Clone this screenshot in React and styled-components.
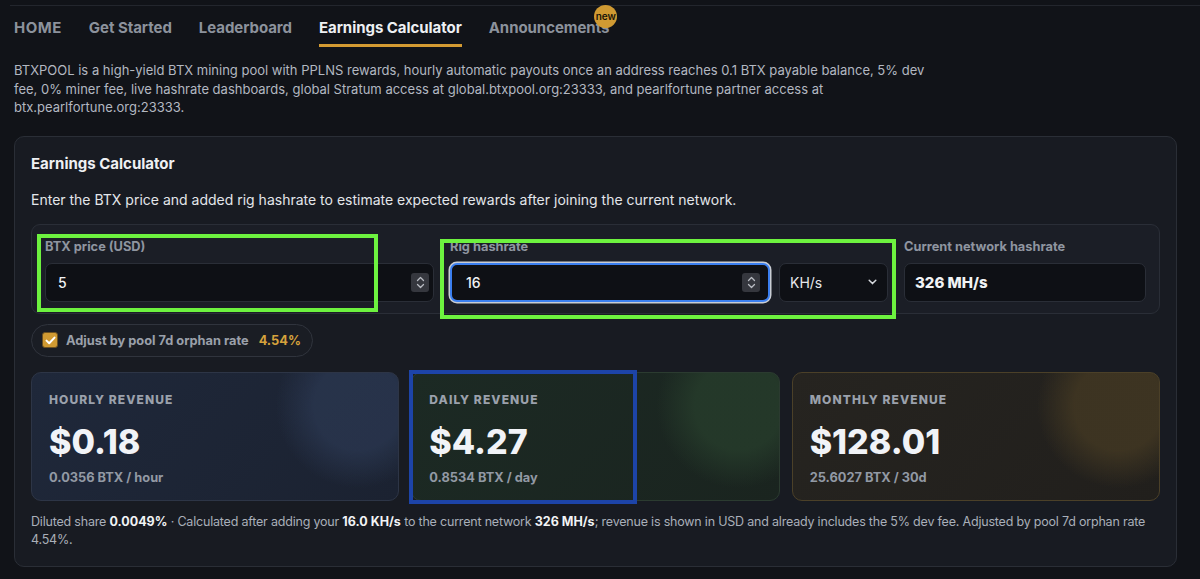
import React, { useState } from 'react';
import styled, { createGlobalStyle } from 'styled-components';

const GlobalStyle = createGlobalStyle`
  html, body {
    margin: 0;
    padding: 0;
    background: #111318;
    font-family: Inter, "Noto Sans", "Liberation Sans", sans-serif;
    color: #e6e8ec;
  }
  * { box-sizing: border-box; }
`;

const Page = styled.div`
  width: 1200px;
  height: 579px;
  overflow: hidden;
  position: relative;
  padding: 5px 0 0 10px;
`;

const Nav = styled.nav`
  display: flex;
  gap: 27px;
  border-top: 1px solid #23262d;
  padding-left: 4px;
`;

const Tab = styled.div`
  position: relative;
  padding: 12px 0 7px;
  font-size: 15px;
  font-weight: 700;
  line-height: 19px;
  letter-spacing: ${(p) => (p.caps ? '0.5px' : '-0.05px')};
  color: ${(p) => (p.active ? '#eef0f3' : '#8c929c')};
  border-bottom: 3px solid ${(p) => (p.active ? '#d49b32' : 'transparent')};
`;

const Badge = styled.span`
  position: absolute;
  top: -1px;
  right: -8px;
  width: 23px;
  height: 23px;
  border-radius: 50%;
  background: #d09a32;
  color: #1a1408;
  font-size: 10px;
  font-weight: 600;
  display: flex;
  align-items: center;
  justify-content: center;
  letter-spacing: 0;
`;

const Intro = styled.p`
  margin: 14px 0 0 4px;
  max-width: 930px;
  font-size: 13px;
  line-height: 18.5px;
  color: #b3b8c1;
`;

const Card = styled.section`
  margin: 19px 0 0 4px;
  width: 1163px;
  background: #181b22;
  border: 1px solid #2a2e36;
  border-radius: 10px;
  padding: 17px 16px 17px;
`;

const Title = styled.h2`
  margin: 0;
  font-size: 15px;
  line-height: 20px;
  font-weight: 700;
  color: #eef0f3;
`;

const Lead = styled.p`
  margin: 16px 0 0;
  font-size: 14px;
  line-height: 20px;
  color: #e3e6ea;
`;

const Panel = styled.div`
  margin-top: 14px;
  display: grid;
  grid-template-columns: 389px 438px 1fr;
  column-gap: 16px;
  padding: 14px 13px 11px;
  background: #1b1e26;
  border: 1px solid #2a2e37;
  border-radius: 9px;
`;

const Field = styled.div`
  display: flex;
  flex-direction: column;
  gap: 8px;
`;

const Label = styled.label`
  font-size: 12.8px;
  font-weight: 700;
  line-height: 16px;
  color: #8f95a0;
`;

const Row = styled.div`
  display: flex;
  gap: 9px;
`;

const InputBox = styled.div`
  position: relative;
  flex: 1;
  height: 39px;
  display: flex;
  align-items: center;
  padding: 0 4px 0 ${(p) => (p.focused ? '12px' : '10px')};
  background: #0e1015;
  border: ${(p) => (p.focused ? '2px solid #3b7ff0' : '1px solid #2a2e37')};
  box-shadow: ${(p) => (p.focused ? '0 0 0 1.5px #c9cdd4' : 'none')};
  border-radius: 7px;
`;

const Input = styled.input`
  flex: 1;
  min-width: 0;
  background: transparent;
  border: none;
  outline: none;
  color: #f1f3f5;
  font-family: inherit;
  font-size: 14px;
  font-weight: 500;
`;

const Spinner = styled.span`
  width: 18px;
  height: 19px;
  margin-right: ${(p) => (p.inset ? '4px' : '0')};
  border-radius: 3px;
  background: #35373e;
  display: flex;
  align-items: center;
  justify-content: center;
`;

const Select = styled.div`
  width: 109px;
  height: 39px;
  display: flex;
  align-items: center;
  justify-content: space-between;
  padding: 0 10px;
  background: #0e1015;
  border: 1px solid #2a2e37;
  border-radius: 7px;
  font-size: 14px;
  color: #e6e8ec;
`;

const Static = styled.div`
  height: 39px;
  display: flex;
  align-items: center;
  padding: 0 10px;
  background: #0e1015;
  border: 1px solid #2a2e37;
  border-radius: 7px;
  font-size: 15px;
  font-weight: 800;
  color: #f1f3f5;
`;

const Pill = styled.label`
  margin-top: 10px;
  display: inline-flex;
  align-items: center;
  gap: 8px;
  height: 33px;
  padding: 0 11px 0 10px;
  border: 1px solid #30343d;
  border-radius: 17px;
  background: #1a1d24;
  font-size: 12.8px;
  font-weight: 700;
  color: #9aa0aa;
`;

const Check = styled.span`
  width: 16px;
  height: 16px;
  border-radius: 3px;
  background: #d09a32;
  border: 1px solid #6b5020;
  display: flex;
  align-items: center;
  justify-content: center;
`;

const Rate = styled.span`
  color: #d6a23c;
  margin-left: 2px;
`;

const Cards = styled.div`
  margin-top: 15px;
  display: grid;
  grid-template-columns: repeat(3, 1fr);
  gap: 12px;
`;

const tones = {
  blue: { bg: '#1b2231', bg2: '#1f283a', glow: 'rgba(40, 52, 76, 0.9)', border: '#2d3546' },
  green: { bg: '#1a241f', bg2: '#1c2a24', glow: 'rgba(37, 58, 42, 0.9)', border: '#2b3b30' },
  amber: { bg: '#211f1c', bg2: '#262420', glow: 'rgba(64, 54, 34, 0.9)', border: '#4b4028' },
};

const Revenue = styled.div`
  height: 129px;
  padding: 19px 17px;
  border-radius: 10px;
  border: 1px solid ${(p) => tones[p.tone].border};
  background:
    radial-gradient(circle at 89% 26%, ${(p) => tones[p.tone].glow} 0, ${(p) => tones[p.tone].glow} 44px, transparent 82px),
    linear-gradient(135deg, ${(p) => tones[p.tone].bg2}, ${(p) => tones[p.tone].bg});
`;

const RevLabel = styled.div`
  font-size: 12px;
  font-weight: 800;
  letter-spacing: 1.1px;
  line-height: 16px;
  color: #9ba1ac;
`;

const RevValue = styled.div`
  margin-top: 16px;
  font-size: 34px;
  font-weight: 800;
  line-height: 36px;
  color: #f1f3f7;
`;

const RevSub = styled.div`
  margin-top: 10px;
  font-size: 12.8px;
  font-weight: 700;
  line-height: 16px;
  color: #9299a4;
`;

const Note = styled.p`
  margin: 12px 0 0;
  font-size: 12.5px;
  line-height: 18px;
  letter-spacing: -0.2px;
  color: #a9afb9;

  b {
    color: #f1f3f5;
    font-weight: 700;
    letter-spacing: 0;
  }
`;

const Mark = styled.div`
  position: absolute;
  border: 4px solid ${(p) => p.color};
  pointer-events: none;
`;

const Chevrons = () => (
  <svg width="9" height="13" viewBox="0 0 9 13" fill="none" stroke="#b9bcc3" strokeWidth="1.3" strokeLinecap="round" strokeLinejoin="round">
    <path d="M1.5 4.5 L4.5 1.5 L7.5 4.5" />
    <path d="M1.5 8.5 L4.5 11.5 L7.5 8.5" />
  </svg>
);

const cards = [
  { tone: 'blue', label: 'HOURLY REVENUE', value: '$0.18', sub: '0.0356 BTX / hour' },
  { tone: 'green', label: 'DAILY REVENUE', value: '$4.27', sub: '0.8534 BTX / day' },
  { tone: 'amber', label: 'MONTHLY REVENUE', value: '$128.01', sub: '25.6027 BTX / 30d' },
];

const App = () => {
  const [price, setPrice] = useState('5');
  const [rig, setRig] = useState('16');

  return (
    <Page>
      <GlobalStyle />
      <Nav>
        <Tab caps>HOME</Tab>
        <Tab>Get Started</Tab>
        <Tab>Leaderboard</Tab>
        <Tab active>Earnings Calculator</Tab>
        <Tab>
          Announcements
          <Badge>new</Badge>
        </Tab>
      </Nav>

      <Intro>
        BTXPOOL is a high-yield BTX mining pool with PPLNS rewards, hourly automatic payouts once an address reaches 0.1 BTX
        payable balance, 5% dev fee, 0% miner fee, live hashrate dashboards, global Stratum access at global.btxpool.org:23333,
        and pearlfortune partner access at btx.pearlfortune.org:23333.
      </Intro>

      <Card>
        <Title>Earnings Calculator</Title>
        <Lead>
          Enter the BTX price and added rig hashrate to estimate expected rewards after joining the current network.
        </Lead>

        <Panel>
          <Field>
            <Label>BTX price (USD)</Label>
            <InputBox>
              <Input value={price} onChange={(e) => setPrice(e.target.value)} />
              <Spinner>
                <Chevrons />
              </Spinner>
            </InputBox>
          </Field>
          <Field>
            <Label>Rig hashrate</Label>
            <Row>
              <InputBox focused>
                <Input value={rig} onChange={(e) => setRig(e.target.value)} />
                <Spinner inset>
                  <Chevrons />
                </Spinner>
              </InputBox>
              <Select>
                KH/s
                <svg width="9" height="6" viewBox="0 0 9 6" fill="none" stroke="#d6d9de" strokeWidth="1.5" strokeLinecap="round" strokeLinejoin="round">
                  <path d="M1.2 1.2 L4.5 4.6 L7.8 1.2" />
                </svg>
              </Select>
            </Row>
          </Field>
          <Field>
            <Label>Current network hashrate</Label>
            <Static>326 MH/s</Static>
          </Field>
        </Panel>

        <Pill>
          <Check>
            <svg width="11" height="9" viewBox="0 0 11 9" fill="none" stroke="#fff" strokeWidth="2" strokeLinecap="round" strokeLinejoin="round">
              <path d="M1.5 4.6 L4.2 7.2 L9.5 1.6" />
            </svg>
          </Check>
          Adjust by pool 7d orphan rate
          <Rate>4.54%</Rate>
        </Pill>

        <Cards>
          {cards.map((c) => (
            <Revenue key={c.label} tone={c.tone}>
              <RevLabel>{c.label}</RevLabel>
              <RevValue>{c.value}</RevValue>
              <RevSub>{c.sub}</RevSub>
            </Revenue>
          ))}
        </Cards>

        <Note>
          Diluted share <b>0.0049%</b> · Calculated after adding your <b>16.0 KH/s</b> to the current network{' '}
          <b>326 MH/s</b>; revenue is shown in USD and already includes the 5% dev fee. Adjusted by pool 7d orphan rate
          <br />
          4.54%.
        </Note>
      </Card>

      <Mark color="#6df23f" style={{ left: 37, top: 234, width: 341, height: 78 }} />
      <Mark color="#6df23f" style={{ left: 440, top: 239, width: 456, height: 80 }} />
      <Mark color="#1d44a8" style={{ left: 409, top: 370, width: 228, height: 134 }} />
    </Page>
  );
};

export default App;
